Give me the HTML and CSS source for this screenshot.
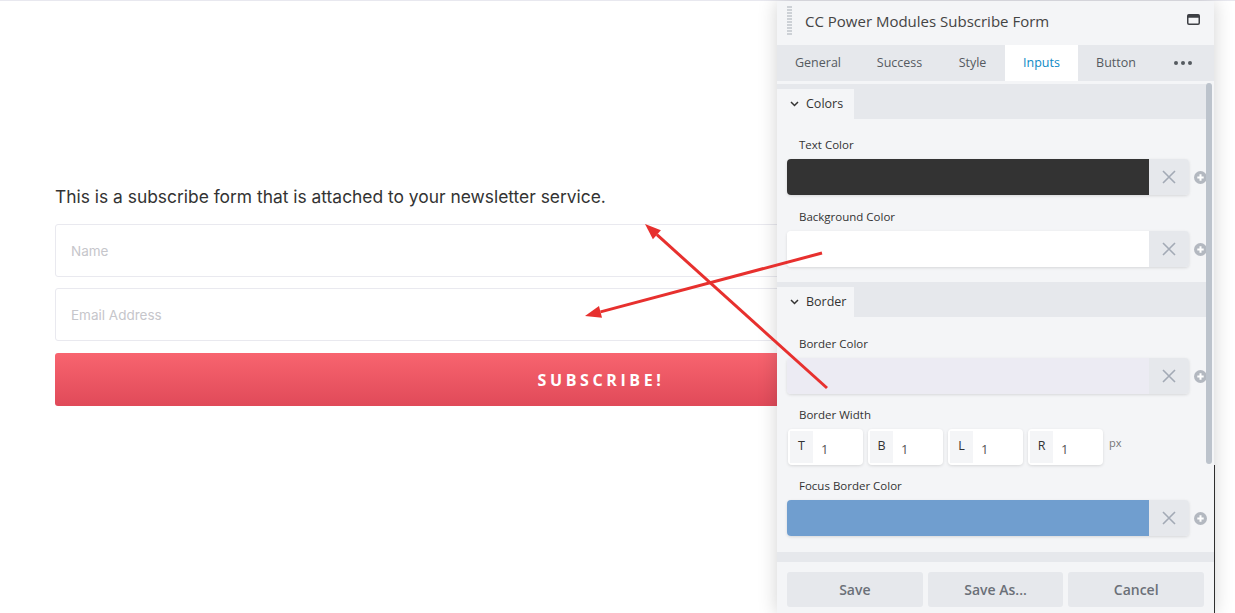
FILE: index.html
```html
<!DOCTYPE html>
<html lang="en">
<head>
<meta charset="utf-8">
<title>CC Power Modules Subscribe Form</title>
<link rel="stylesheet" href="styles.css">
</head>
<body>
<div class="page">
  <main class="content">
    <p class="intro">This is a subscribe form that is attached to your newsletter service.</p>
    <form class="sub-form">
      <div class="input"><span class="ph">Name</span></div>
      <div class="input"><span class="ph">Email Address</span></div>
      <div class="sub-btn">SUBSCRIBE!</div>
    </form>
  </main>

  <div class="behind-line"></div>

  <aside class="panel">
    <header class="panel-head">
      <span class="grip"></span>
      <h1 class="panel-title">CC Power Modules Subscribe Form</h1>
      <svg class="maxi" width="13" height="11" viewBox="0 0 13 11"><rect x="0.75" y="0.75" width="11.5" height="9.5" rx="1.2" fill="none" stroke="#3d3f44" stroke-width="1.5"/><rect x="0.75" y="0.75" width="11.5" height="3" fill="#3d3f44"/></svg>
    </header>
    <nav class="tabs">
      <span class="tab t-gen">General</span>
      <span class="tab t-suc">Success</span>
      <span class="tab t-sty">Style</span>
      <span class="tab t-inp active">Inputs</span>
      <span class="tab t-btn">Button</span>
      <span class="tab more"><i></i><i></i><i></i></span>
    </nav>
    <div class="panel-body">
      <div class="scroll"></div>
      <section class="sect">
        <div class="sect-head"><span class="sect-tab"><svg width="9" height="6" viewBox="0 0 9 6"><path d="M1 1l3.5 3.5L8 1" fill="none" stroke="#333" stroke-width="1.5"/></svg>Colors</span></div>
        <div class="sect-body">
          <div class="fld">
            <label class="lbl">Text Color</label>
            <div class="row">
              <div class="color"><span class="swatch sw-dark"></span><span class="clear"><svg width="14" height="14" viewBox="0 0 14 14"><path d="M1 1l12 12M13 1L1 13" stroke="#a3aab5" stroke-width="1.6"/></svg></span></div>
              <svg class="plus" width="13" height="13" viewBox="0 0 13 13"><circle cx="6.5" cy="6.5" r="6.5" fill="#b3b8c0"/><path d="M6.5 3.3v6.4M3.3 6.5h6.4" stroke="#fff" stroke-width="2"/></svg>
            </div>
          </div>
          <div class="fld">
            <label class="lbl">Background Color</label>
            <div class="row">
              <div class="color"><span class="swatch sw-white"></span><span class="clear"><svg width="14" height="14" viewBox="0 0 14 14"><path d="M1 1l12 12M13 1L1 13" stroke="#a3aab5" stroke-width="1.6"/></svg></span></div>
              <svg class="plus" width="13" height="13" viewBox="0 0 13 13"><circle cx="6.5" cy="6.5" r="6.5" fill="#b3b8c0"/><path d="M6.5 3.3v6.4M3.3 6.5h6.4" stroke="#fff" stroke-width="2"/></svg>
            </div>
          </div>
        </div>
      </section>
      <section class="sect">
        <div class="sect-head"><span class="sect-tab"><svg width="9" height="6" viewBox="0 0 9 6"><path d="M1 1l3.5 3.5L8 1" fill="none" stroke="#333" stroke-width="1.5"/></svg>Border</span></div>
        <div class="sect-body">
          <div class="fld">
            <label class="lbl">Border Color</label>
            <div class="row">
              <div class="color"><span class="swatch sw-lav"></span><span class="clear"><svg width="14" height="14" viewBox="0 0 14 14"><path d="M1 1l12 12M13 1L1 13" stroke="#a3aab5" stroke-width="1.6"/></svg></span></div>
              <svg class="plus" width="13" height="13" viewBox="0 0 13 13"><circle cx="6.5" cy="6.5" r="6.5" fill="#b3b8c0"/><path d="M6.5 3.3v6.4M3.3 6.5h6.4" stroke="#fff" stroke-width="2"/></svg>
            </div>
          </div>
          <div class="fld">
            <label class="lbl">Border Width</label>
            <div class="dims">
              <div class="dim"><span class="dim-k">T</span><span class="dim-v">1</span></div>
              <div class="dim"><span class="dim-k">B</span><span class="dim-v">1</span></div>
              <div class="dim"><span class="dim-k">L</span><span class="dim-v">1</span></div>
              <div class="dim"><span class="dim-k">R</span><span class="dim-v">1</span></div>
              <span class="unit">px</span>
            </div>
          </div>
          <div class="fld">
            <label class="lbl">Focus Border Color</label>
            <div class="row">
              <div class="color"><span class="swatch sw-blue"></span><span class="clear"><svg width="14" height="14" viewBox="0 0 14 14"><path d="M1 1l12 12M13 1L1 13" stroke="#a3aab5" stroke-width="1.6"/></svg></span></div>
              <svg class="plus" width="13" height="13" viewBox="0 0 13 13"><circle cx="6.5" cy="6.5" r="6.5" fill="#b3b8c0"/><path d="M6.5 3.3v6.4M3.3 6.5h6.4" stroke="#fff" stroke-width="2"/></svg>
            </div>
          </div>
        </div>
      </section>
    </div>
    <div class="band"></div>
    <footer class="panel-foot">
      <span class="btn">Save</span>
      <span class="btn">Save As...</span>
      <span class="btn">Cancel</span>
    </footer>
  </aside>

  <svg class="arrows" width="1235" height="613" viewBox="0 0 1235 613">
    <line x1="827" y1="388" x2="656.9" y2="234.7" stroke="#e7302e" stroke-width="3"/>
    <polygon points="645,224 660.9,230.2 652.9,239.2" fill="#e7302e"/>
    <line x1="822" y1="253" x2="600.5" y2="311.9" stroke="#e7302e" stroke-width="3"/>
    <polygon points="585,316 599,306.1 602,317.7" fill="#e7302e"/>
  </svg>
</div>
</body>
</html>
```

FILE: styles.css
```css
* { box-sizing: border-box; }
html, body { margin: 0; padding: 0; background: #fff; }
body { width: 1235px; height: 613px; overflow: hidden; }

.page {
  position: relative;
  width: 1235px;
  height: 613px;
  border-top: 1px solid #e8e8ef;
}

/* left content */
.content { padding: 184px 0 0 55px; }
.intro {
  margin: 0 0 15px;
  font-family: Inter, Roboto, "Liberation Sans", sans-serif;
  font-size: 17.4px;
  line-height: 24px;
  color: #333;
}
.sub-form { width: 1092px; display: flex; flex-direction: column; }
.input {
  height: 53px;
  border: 1px solid #e9e9ef;
  border-radius: 3px;
  padding: 0 15px;
  display: flex;
  align-items: center;
  margin-bottom: 11px;
}
.input + .input { margin-bottom: 12px; }
.ph {
  font-family: Inter, Roboto, "Liberation Sans", sans-serif;
  font-size: 13.5px;
  color: #c6c6cb;
}
.sub-btn {
  height: 53px;
  border-radius: 3px;
  background: linear-gradient(#f8646f, #e04a59);
  color: #fff;
  font-family: "Open Sans", "Liberation Sans", sans-serif;
  font-weight: 700;
  font-size: 16px;
  letter-spacing: 3.6px;
  display: flex;
  align-items: center;
  justify-content: center;
}

.behind-line {
  position: absolute;
  left: 1214px;
  top: 464px;
  width: 1px;
  height: 149px;
  background: #333;
}

/* panel */
.panel {
  position: absolute;
  left: 777px;
  top: 0;
  width: 437px;
  height: 613px;
  background: #f4f5f7;
  box-shadow: 0 0 18px rgba(0,0,0,0.18);
  display: flex;
  flex-direction: column;
  font-family: "Open Sans", "Liberation Sans", sans-serif;
}
.panel-head {
  height: 44px;
  display: flex;
  align-items: center;
  padding: 0 14px 4px 10px;
  background: #f4f5f7;
}
.grip {
  width: 5px;
  height: 30px;
  background: repeating-linear-gradient(#cdd1d6 0 2px, transparent 2px 3px);
  margin-right: 13px;
}
.panel-title {
  margin: 0;
  flex: 1;
  font-size: 15px;
  font-weight: 400;
  color: #444;
}
.maxi { margin-top: -4px; }

.tabs {
  height: 36px;
  background: #e6e8ec;
  display: flex;
}
.tab {
  display: flex;
  align-items: center;
  justify-content: center;
  padding-bottom: 1px;
  font-size: 12.5px;
  color: #555a60;
}
.t-gen { width: 82px; }
.t-suc { width: 81px; }
.t-sty { width: 65px; }
.t-inp { width: 73px; }
.t-btn { width: 76px; }
.tab.active { background: #fff; color: #0e8ac6; }
.tab.more { gap: 3px; width: 60px; padding-right: 2px; }
.tab.more i { width: 4px; height: 4px; border-radius: 50%; background: #555a60; display: block; }

.panel-body {
  position: relative;
  flex: 1;
  padding-top: 3px;
  overflow: hidden;
}
.scroll {
  position: absolute;
  right: 2px;
  top: 2px;
  width: 6px;
  height: 381px;
  border-radius: 3px;
  background: #bcc3cc;
}
.sect-head {
  height: 35px;
  background: #e6e8ec;
  padding-top: 5px;
  margin-right: 8px;
}
.sect-tab {
  display: inline-flex;
  align-items: center;
  gap: 7px;
  height: 30px;
  width: 77px;
  padding-left: 13px;
  padding-bottom: 1px;
  background: #f4f5f7;
  font-size: 12.5px;
  color: #333;
}
.sect-body {
  padding: 18px 0 15px 10px;
  display: flex;
  flex-direction: column;
  gap: 14px;
}
.sect + .sect .sect-body { gap: 13px; padding-top: 19px; }
.lbl {
  display: block;
  padding-left: 12px;
  margin-bottom: 6px;
  font-size: 11.5px;
  line-height: 16px;
  color: #333;
}
.row { display: flex; align-items: center; gap: 5px; }
.color {
  width: 402px;
  height: 36px;
  display: flex;
  border-radius: 4px;
  overflow: hidden;
  box-shadow: 0 1px 3px rgba(0,0,0,0.12);
}
.swatch { flex: 1; }
.sw-dark { background: #333; }
.sw-white { background: #fff; }
.sw-lav { background: #ecebf3; }
.sw-blue { background: #709ecf; }
.clear {
  width: 40px;
  background: #e6e8ec;
  display: flex;
  align-items: center;
  justify-content: center;
}

.dims { display: flex; gap: 5px; padding-left: 1px; margin-top: 1px; }
.dim {
  width: 75px;
  height: 36px;
  background: #fff;
  border-radius: 4px;
  box-shadow: 0 1px 3px rgba(0,0,0,0.12);
  display: flex;
  padding: 2px;
}
.dim-k {
  width: 23px;
  background: #f4f5f7;
  display: flex;
  align-items: center;
  justify-content: center;
  font-size: 12.5px;
  color: #333;
  padding-bottom: 3px;
}
.dim-v {
  padding-left: 8px;
  display: flex;
  align-items: center;
  padding-top: 3px;
  font-size: 13px;
  color: #555;
}
.unit { font-size: 11px; color: #777; padding: 6px 0 0 1px; }

.band { height: 10px; background: #e6e8ec; }
.panel-foot {
  height: 52px;
  display: flex;
  gap: 5px;
  padding: 10px 10px 0;
}
.btn {
  flex: 1;
  height: 35px;
  background: #e6e8ec;
  border-radius: 3px;
  display: flex;
  align-items: center;
  justify-content: center;
  font-size: 14px;
  font-weight: 600;
  color: #6b7078;
}

.arrows {
  position: absolute;
  left: 0;
  top: -1px;
  pointer-events: none;
}
```
